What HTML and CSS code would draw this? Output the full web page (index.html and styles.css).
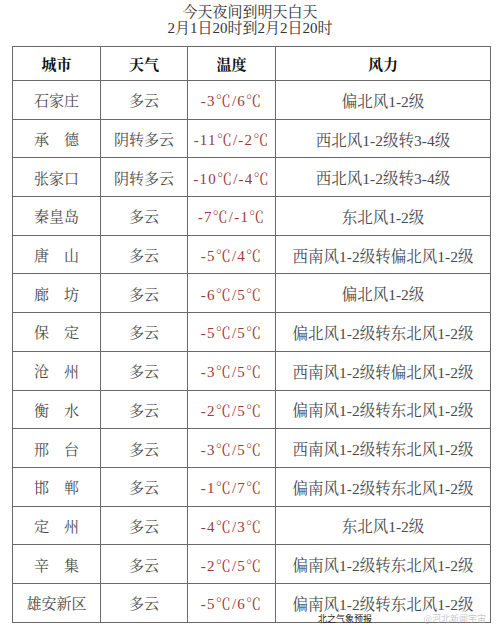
FILE: index.html
```html
<!DOCTYPE html>
<html lang="zh">
<head>
<meta charset="utf-8">
<link rel="stylesheet" href="styles.css">
</head>
<body>
<div class="page">
  <div class="title">
    <div>今天夜间到明天白天</div>
    <div>2月1日20时到2月2日20时</div>
  </div>
  <table class="weather">
    <colgroup><col class="c1"><col class="c2"><col class="c3"><col class="c4"></colgroup>
    <thead>
      <tr><th>城市</th><th>天气</th><th>温度</th><th>风力</th></tr>
    </thead>
    <tbody>
      <tr><td>石家庄</td><td>多云</td><td class="t">-3℃/6℃</td><td>偏北风1-2级</td></tr>
      <tr><td>承　德</td><td>阴转多云</td><td class="t">-11℃/-2℃</td><td>西北风1-2级转3-4级</td></tr>
      <tr><td>张家口</td><td>阴转多云</td><td class="t">-10℃/-4℃</td><td>西北风1-2级转3-4级</td></tr>
      <tr><td>秦皇岛</td><td>多云</td><td class="t">-7℃/-1℃</td><td>东北风1-2级</td></tr>
      <tr><td>唐　山</td><td>多云</td><td class="t">-5℃/4℃</td><td>西南风1-2级转偏北风1-2级</td></tr>
      <tr><td>廊　坊</td><td>多云</td><td class="t">-6℃/5℃</td><td>偏北风1-2级</td></tr>
      <tr><td>保　定</td><td>多云</td><td class="t">-5℃/5℃</td><td>偏北风1-2级转东北风1-2级</td></tr>
      <tr><td>沧　州</td><td>多云</td><td class="t">-3℃/5℃</td><td>西南风1-2级转偏北风1-2级</td></tr>
      <tr><td>衡　水</td><td>多云</td><td class="t">-2℃/5℃</td><td>偏南风1-2级转东北风1-2级</td></tr>
      <tr><td>邢　台</td><td>多云</td><td class="t">-3℃/5℃</td><td>西南风1-2级转东北风1-2级</td></tr>
      <tr><td>邯　郸</td><td>多云</td><td class="t">-1℃/7℃</td><td>偏南风1-2级转东北风1-2级</td></tr>
      <tr><td>定　州</td><td>多云</td><td class="t">-4℃/3℃</td><td>东北风1-2级</td></tr>
      <tr><td>辛　集</td><td>多云</td><td class="t">-2℃/5℃</td><td>偏南风1-2级转东北风1-2级</td></tr>
      <tr><td>雄安新区</td><td>多云</td><td class="t">-5℃/6℃</td><td>偏南风1-2级转东北风1-2级</td></tr>
    </tbody>
  </table>
  <div class="watermark">@河北新闻宇宙</div>
  <div class="foot">北之气象预报</div>
</div>
</body>
</html>
```

FILE: styles.css
```css
html, body {
  margin: 0;
  padding: 0;
  background: #ffffff;
}
body {
  width: 500px;
  height: 626px;
  overflow: hidden;
  font-family: "Liberation Serif", "Noto Serif CJK SC", "Noto Sans CJK SC", serif;
  color: #444;
}
.page {
  position: relative;
  width: 500px;
  height: 626px;
}
.title {
  padding-top: 4px;
  text-align: center;
  font-size: 15px;
  line-height: 16px;
  color: #333;
}
.weather {
  margin: 10px 0 0 12px;
  width: 478px;
  border-collapse: collapse;
  table-layout: fixed;
}
.c1 { width: 88px; }
.c2 { width: 87px; }
.c3 { width: 88px; }
.c4 { width: 215px; }
.weather th, .weather td {
  border: 1px solid #6a6a6a;
  text-align: center;
  padding: 0;
  font-size: 15px;
  white-space: nowrap;
}
.weather th {
  height: 33px;
  font-weight: bold;
  color: #111;
}
.weather td {
  height: 37.7px;
  color: #4a4a4a;
}
.weather td:nth-child(4) {
  font-size: 15.5px;
}
.weather td.t {
  color: #9b3a3a;
  letter-spacing: 1.2px;
}
.watermark {
  position: absolute;
  right: 14px;
  top: 614px;
  font-size: 9px;
  line-height: 10px;
  color: rgba(160, 160, 160, 0.6);
  font-family: "Noto Sans CJK SC", sans-serif;
}
.foot {
  position: absolute;
  left: 318px;
  top: 614px;
  font-size: 9px;
  line-height: 10px;
  color: #222;
  font-family: "Noto Sans CJK SC", sans-serif;
}
```
